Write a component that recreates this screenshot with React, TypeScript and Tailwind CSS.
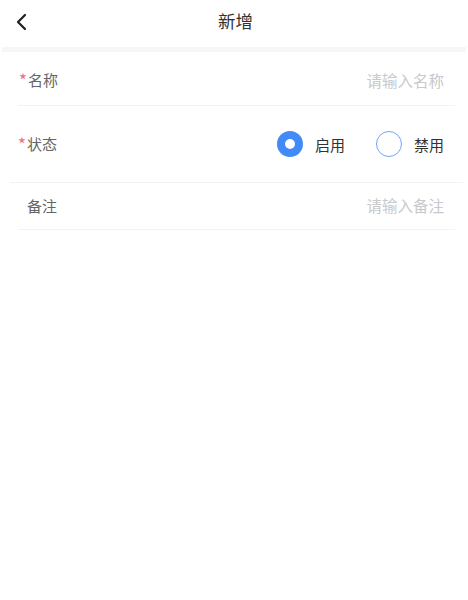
import React, { useState } from "react";

const Radio = ({ checked, label, onClick }: any) => (
  <button onClick={onClick} className="flex items-center gap-[12px]">
    {checked ? (
      <span className="w-[26px] h-[26px] rounded-full border-[8px] border-[#418af8] bg-white box-border" />
    ) : (
      <span className="w-[26px] h-[26px] rounded-full border border-[#6fa6f8] bg-white box-border" />
    )}
    <span className="text-[15px] text-[#323233] leading-none">{label}</span>
  </button>
);

export default function App() {
  const [status, setStatus] = useState("on");

  return (
    <div
      className="w-[468px] h-[600px] bg-white"
      style={{ fontFamily: '"Noto Sans CJK SC", "Noto Sans", sans-serif' }}
    >
      <div className="relative h-[47px] flex items-center justify-center">
        <svg
          className="absolute left-[15px] top-[13px]"
          width="14"
          height="18"
          viewBox="0 0 14 18"
          fill="none"
        >
          <path d="M10 2 L3 9 L10 16" stroke="#1f1f1f" strokeWidth="2.2" strokeLinecap="round" strokeLinejoin="round" />
        </svg>
        <span className="text-[17.5px] text-[#323233] -mt-[5px] ml-[3px]">新增</span>
      </div>
      <div className="mx-[2px] h-[5px] bg-[#f5f6f8]" />

      <div className="flex items-center justify-between h-[54px] ml-[18px] mr-[13px] border-b border-[#f2f3f5] pt-[4px]">
        <div className="flex items-center text-[15px] text-[#646566]">
          <span className="text-[#f56c7a] text-[17px] leading-none -mt-[2px] w-[10px] pl-[1px]">*</span>
          <span>名称</span>
        </div>
        <span className="text-[15.5px] text-[#c8c9cc] mr-[11px]">请输入名称</span>
      </div>

      <div className="flex items-center justify-between h-[77px] ml-[10px] mr-[5px] border-b border-[#f2f3f5]">
        <div className="flex items-center text-[15px] text-[#646566] pl-[8px]">
          <span className="text-[#f56c7a] text-[17px] leading-none -mt-[2px] w-[9px]">*</span>
          <span>状态</span>
        </div>
        <div className="flex items-center gap-[31px] mr-[19px]">
          <Radio checked={status === "on"} label="启用" onClick={() => setStatus("on")} />
          <Radio checked={status === "off"} label="禁用" onClick={() => setStatus("off")} />
        </div>
      </div>

      <div className="flex items-center justify-between h-[47px] ml-[18px] mr-[13px] border-b border-[#f2f3f5]">
        <span className="text-[15px] text-[#646566] pl-[9px]">备注</span>
        <span className="text-[15.5px] text-[#c8c9cc] mr-[11px]">请输入备注</span>
      </div>
    </div>
  );
}
